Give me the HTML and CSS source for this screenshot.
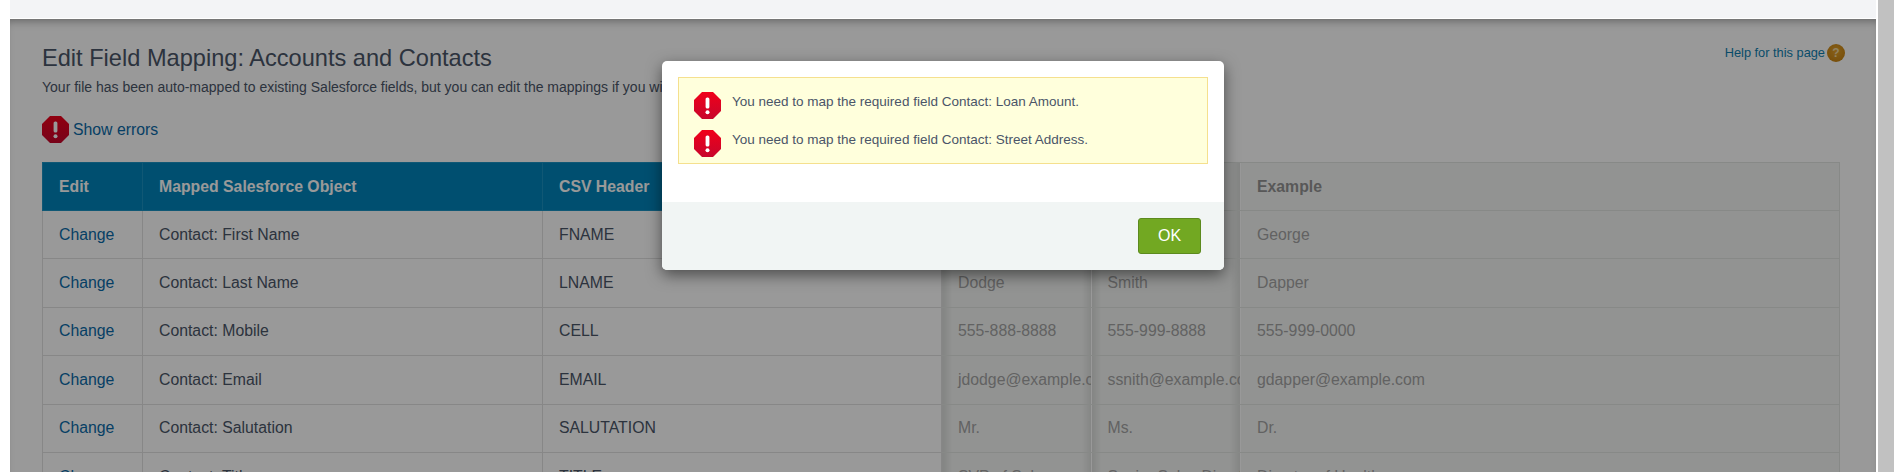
FILE: index.html
```html
<!DOCTYPE html>
<html lang="en">
<head>
<meta charset="utf-8">
<title>Edit Field Mapping</title>
<link rel="stylesheet" href="styles.css">
</head>
<body>
<div class="window">
  <div class="main">
    <div class="topbar"></div>
    <div class="panel">
      <div class="head">
        <div>
          <h1 class="title">Edit Field Mapping: Accounts and Contacts</h1>
          <p class="sub">Your file has been auto-mapped to existing Salesforce fields, but you can edit the mappings if you wish.</p>
        </div>
        <a class="help" href="#">Help for this page <span class="help-icon">?</span></a>
      </div>
      <a class="show-errors" href="#">
        <svg class="stop" viewBox="0 0 27 27"><defs><linearGradient id="g1" x1="0" y1="0" x2="0" y2="1"><stop offset="0" stop-color="#f0001a"/><stop offset="1" stop-color="#c8062c"/></linearGradient></defs><polygon points="8,0 19,0 27,8 27,19 19,27 8,27 0,19 0,8" fill="url(#g1)"/><rect x="11.6" y="5.5" width="3.8" height="11" rx="1.6" fill="#fff"/><circle cx="13.5" cy="20.3" r="2" fill="#fff"/></svg>
        <span>Show errors</span>
      </a>
      <table class="grid">
        <colgroup><col class="c1"><col class="c2"><col class="c3"><col class="c4"><col class="c4"><col></colgroup>
        <thead>
          <tr><th>Edit</th><th>Mapped Salesforce Object</th><th>CSV Header</th><th class="t m">Example</th><th class="t m">Example</th><th class="t">Example</th></tr>
        </thead>
        <tbody>
          <tr><td><a href="#">Change</a></td><td>Contact: First Name</td><td>FNAME</td><td class="t m">Roger</td><td class="t m">Sam</td><td class="t">George</td></tr>
          <tr><td><a href="#">Change</a></td><td>Contact: Last Name</td><td>LNAME</td><td class="t m">Dodge</td><td class="t m">Smith</td><td class="t">Dapper</td></tr>
          <tr><td><a href="#">Change</a></td><td>Contact: Mobile</td><td>CELL</td><td class="t m">555-888-8888</td><td class="t m">555-999-8888</td><td class="t">555-999-0000</td></tr>
          <tr><td><a href="#">Change</a></td><td>Contact: Email</td><td>EMAIL</td><td class="t m">jdodge@example.com</td><td class="t m">ssnith@example.com</td><td class="t">gdapper@example.com</td></tr>
          <tr><td><a href="#">Change</a></td><td>Contact: Salutation</td><td>SALUTATION</td><td class="t m">Mr.</td><td class="t m">Ms.</td><td class="t">Dr.</td></tr>
          <tr><td><a href="#">Change</a></td><td>Contact: Title</td><td>TITLE</td><td class="t m">SVP of Sales</td><td class="t m">Senior Sales Director</td><td class="t">Director of Health</td></tr>
        </tbody>
      </table>
    </div>
    <div class="overlay">
      <div class="modal">
        <div class="modal-body">
          <ul class="alert">
            <li>
              <svg class="stop" viewBox="0 0 27 27"><polygon points="8,0 19,0 27,8 27,19 19,27 8,27 0,19 0,8" fill="url(#g1)"/><rect x="11.6" y="5.5" width="3.8" height="11" rx="1.6" fill="#fff"/><circle cx="13.5" cy="20.3" r="2" fill="#fff"/></svg>
              <span>You need to map the required field Contact: Loan Amount.</span>
            </li>
            <li>
              <svg class="stop" viewBox="0 0 27 27"><polygon points="8,0 19,0 27,8 27,19 19,27 8,27 0,19 0,8" fill="url(#g1)"/><rect x="11.6" y="5.5" width="3.8" height="11" rx="1.6" fill="#fff"/><circle cx="13.5" cy="20.3" r="2" fill="#fff"/></svg>
              <span>You need to map the required field Contact: Street Address.</span>
            </li>
          </ul>
        </div>
        <div class="modal-foot"><button class="ok">OK</button></div>
      </div>
    </div>
  </div>
  <div class="scrollbar"></div>
</div>
</body>
</html>
```
FILE: styles.css
```css
* { box-sizing: border-box; }
html, body { margin: 0; height: 472px; overflow: hidden; background: #fff; }
body { font-family: "Liberation Sans", Arial, sans-serif; color: #4a5568; font-size: 16px; }
a { color: #0a6aa8; text-decoration: none; }

.window { display: flex; height: 472px; padding-left: 10px; }
.main { position: relative; width: 1866px; height: 472px; overflow: hidden; }
.scrollbar { width: 16px; margin-left: 2px; background: #c1c1c1; }
.topbar { height: 18px; background: #f3f4f6; }

.panel { margin-top: 1px; padding: 27px 32px 0; }
.head { display: flex; justify-content: space-between; align-items: flex-start; }
.title { margin: 0; font-size: 23.6px; font-weight: 400; line-height: 24px; }
.sub { margin: 9px 0 0; font-size: 14px; line-height: 16px; }
.help { display: flex; align-items: center; gap: 2px; font-size: 12.8px; line-height: 18px; color: #0f7fb0; margin-right: -1px; margin-top: -2px; }
.help-icon { width: 18px; height: 18px; border-radius: 50%; background: radial-gradient(circle at 50% 40%, #e2a02a, #c07c0c); color: #f2d9a0; font-size: 12px; font-weight: 700; text-align: center; line-height: 18px; }

.show-errors { display: flex; align-items: center; gap: 4px; margin-top: 21px; font-size: 15.8px; line-height: 27px; height: 27px; }
.stop { width: 27px; height: 27px; flex: none; display: block; }

.grid { margin-top: 19px; width: 1798px; table-layout: fixed; border-collapse: collapse; }
.c1 { width: 100px; }
.c2 { width: 400px; }
.c3 { width: 399px; }
.c4 { width: 149.5px; }
.grid th, .grid td { height: 48.4px; padding: 0 16px; border: 1px solid #e2e2e2; text-align: left; font-size: 15.8px; line-height: 20px; font-weight: 400; white-space: nowrap; overflow: hidden; }
.grid th { height: 48px; font-weight: 700; background: #0084bb; color: #fff; border-color: #1c93c4; }
.grid th.t, .grid td.t { background: #f4f6f4; color: #a3a3a3; border-color: #e2e4e2; }
.grid th.t { color: #939393; }
.grid th.m, .grid td.m { border-left-color: transparent; border-right-color: transparent; background: linear-gradient(90deg, rgba(0,0,0,.1), rgba(0,0,0,0) 10px, rgba(0,0,0,0) calc(100% - 10px), rgba(0,0,0,.09)), #f4f6f4; }

.overlay { position: absolute; left: 0; right: 0; top: 19px; bottom: 0; background: rgba(0,0,0,.4); box-shadow: inset 0 7px 8px -5px rgba(0,0,0,.35); }
.modal { position: absolute; left: 652px; top: 42px; width: 562px; height: 209px; background: #fff; border-radius: 5px; overflow: hidden; box-shadow: 0 5px 15px rgba(0,0,0,.5); display: flex; flex-direction: column; }
.modal-body { flex: 1; padding: 16px 16px 0; }
.alert { list-style: none; margin: 0; padding: 14px 15px 4px; height: 87px; background: #ffffdc; border: 1px solid #f5e08e; display: flex; flex-direction: column; gap: 11px; font-size: 13.5px; }
.alert li { display: flex; gap: 11px; line-height: 20px; height: 27px; }
.modal-foot { height: 68px; background: #f1f5f4; padding: 16px 23px 0 0; display: flex; justify-content: flex-end; align-items: flex-start; }
.ok { width: 63px; height: 36px; background: #72a822; color: #fff; border: 1px solid #5c8a1e; border-radius: 3px; font: 16px "Liberation Sans", Arial, sans-serif; }
```
